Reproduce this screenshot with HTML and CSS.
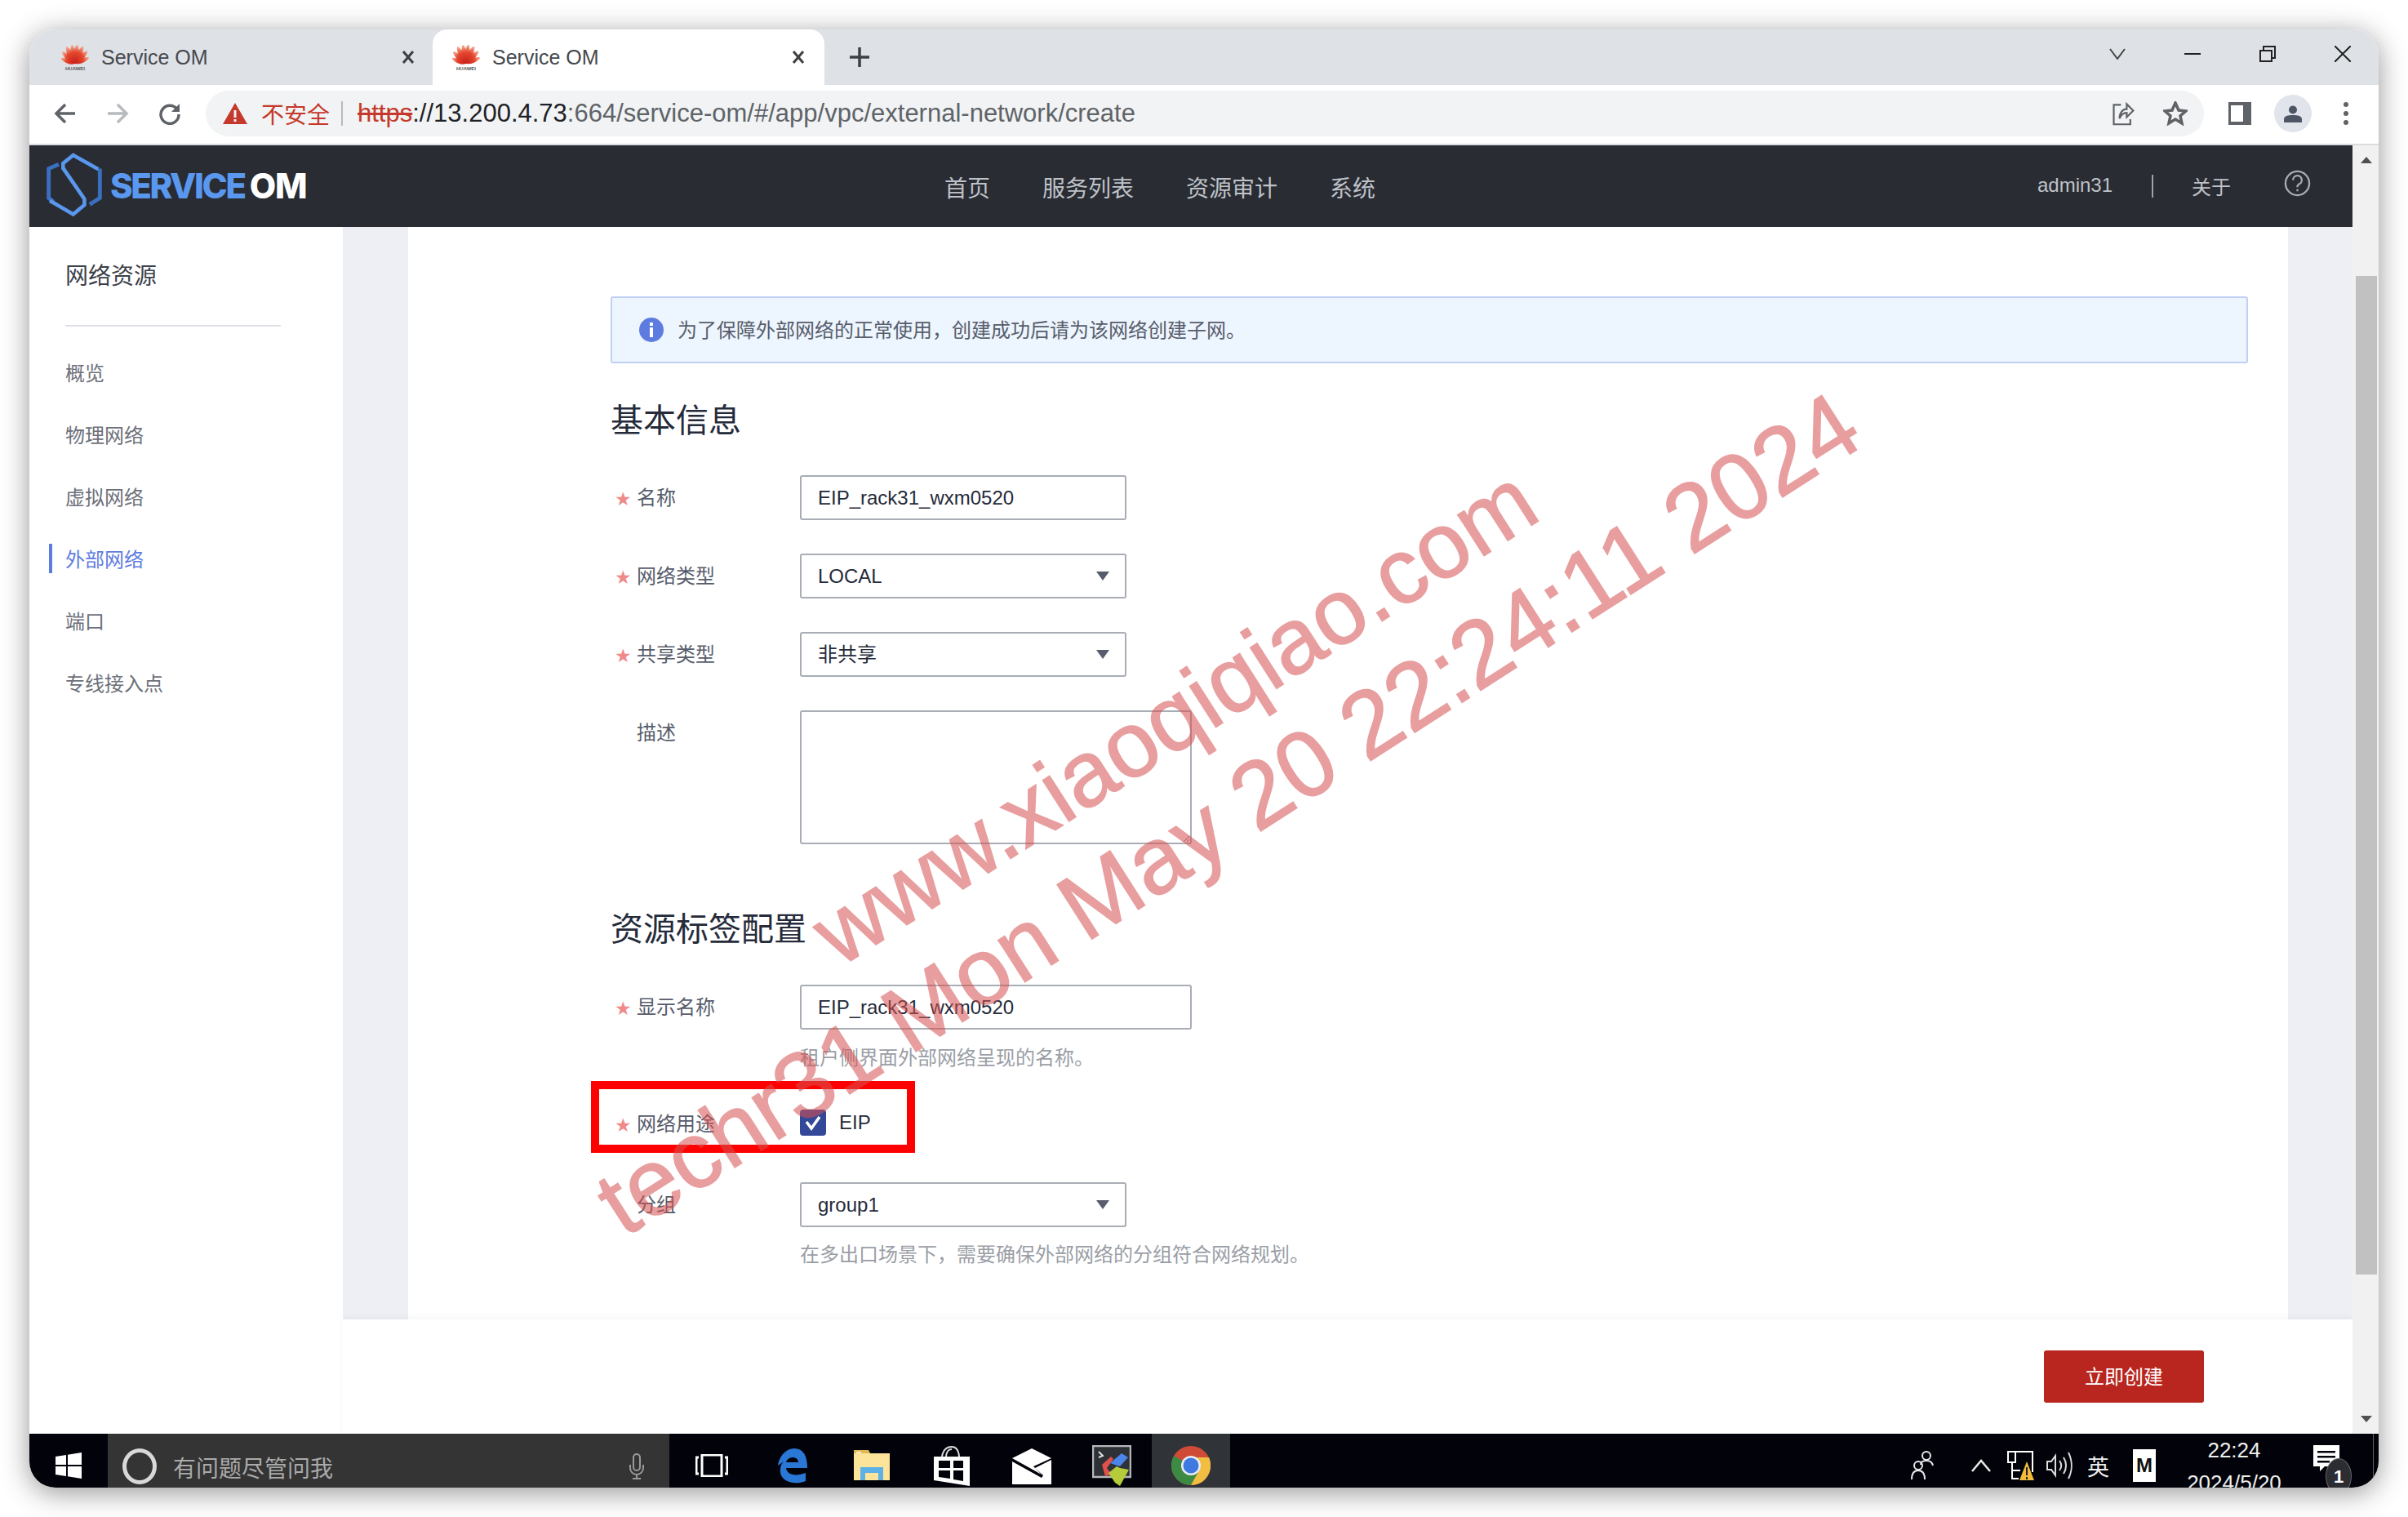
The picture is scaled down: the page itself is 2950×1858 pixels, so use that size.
FILE: index.html
```html
<!DOCTYPE html>
<html lang="zh-CN">
<head>
<meta charset="utf-8">
<title>Service OM</title>
<link rel="stylesheet" href="styles.css">
</head>
<body>
<svg class="defs" width="0" height="0" aria-hidden="true">
  <defs>
    <linearGradient id="petal" gradientUnits="userSpaceOnUse" x1="0" y1="2" x2="0" y2="25"><stop offset="0" stop-color="#f7b09a"/><stop offset=".4" stop-color="#e4472e"/><stop offset="1" stop-color="#c81f19"/></linearGradient>
    <g id="hw-petal"><path d="M17 25 C12.500 20 11.500 12 15.500 2 L17.500 2 C21 12 21 19 17 25Z" fill="url(#petal)"/></g>
    <symbol id="huawei" viewBox="0 0 34 34">
      <use href="#hw-petal" transform="rotate(-68 17 25) translate(17 25) scale(.8) translate(-17 -25)" />
      <use href="#hw-petal" transform="rotate(-46 17 25) translate(17 25) scale(.92) translate(-17 -25)" />
      <use href="#hw-petal" transform="rotate(-26 17 25)" />
      <use href="#hw-petal" transform="rotate(-8 17 25)" />
      <use href="#hw-petal" transform="rotate(8 17 25)" />
      <use href="#hw-petal" transform="rotate(26 17 25)" />
      <use href="#hw-petal" transform="rotate(46 17 25) translate(17 25) scale(.92) translate(-17 -25)" />
      <use href="#hw-petal" transform="rotate(68 17 25) translate(17 25) scale(.8) translate(-17 -25)" />
      <text x="17" y="33" text-anchor="middle" class="hw-text">HUAWEI</text>
    </symbol>
  </defs>
</svg>
<div class="window">
  <div class="tabstrip">
    <div class="tab">
      <svg class="favicon" viewBox="0 0 34 34"><use href="#huawei"/></svg>
      <span class="tab-title">Service OM</span>
      <svg class="tab-x" viewBox="0 0 18 18"><path d="M3 2 15 16M15 2 3 16" /></svg>
    </div>
    <div class="tab tab-active">
      <svg class="favicon" viewBox="0 0 34 34"><use href="#huawei"/></svg>
      <span class="tab-title">Service OM</span>
      <svg class="tab-x" viewBox="0 0 18 18"><path d="M3 2 15 16M15 2 3 16" /></svg>
    </div>
    <svg class="newtab" viewBox="0 0 26 26"><path d="M13 1V25M1 13H25"/></svg>
    <div class="winctl">
      <svg class="ctl ctl-chev" viewBox="0 0 20 14"><path d="M1 1 10 13 19 1"/></svg>
      <svg class="ctl ctl-min" viewBox="0 0 20 20"><path d="M0 10H20"/></svg>
      <svg class="ctl ctl-max" viewBox="0 0 20 20"><path d="M1 6H15V19H1ZM5 6V1H19V15H15"/></svg>
      <svg class="ctl ctl-close" viewBox="0 0 20 20"><path d="M0 0 20 20M20 0 0 20"/></svg>
    </div>
  </div>

  <div class="toolbar">
    <svg class="nav-ico nav-back" viewBox="0 0 28 28"><path d="M26 14H4M14 3 3 14 14 25"/></svg>
    <svg class="nav-ico nav-fwd" viewBox="0 0 28 28"><path d="M2 14H24M14 3 25 14 14 25"/></svg>
    <svg class="nav-ico nav-reload" viewBox="0 0 28 28"><path d="M23 9A11 11 0 1 0 25 15"/><path class="fill" d="M26 2V12H16Z"/></svg>
    <div class="omnibox">
      <svg class="warn" viewBox="0 0 30 26"><path d="M15 0 30 26H0Z"/><rect class="warn-in" x="13.500" y="9" width="3" height="9"/><rect class="warn-in" x="13.500" y="20" width="3" height="3"/></svg>
      <span class="insecure">不安全</span>
      <span class="omni-sep"></span>
      <span class="url"><span class="scheme">https</span>://13.200.4.73<span class="url-dim">:664/service-om/#/app/vpc/external-network/create</span></span>
      <svg class="omni-ico omni-share" viewBox="0 0 30 34"><path d="M12 5H2V32H25V25"/><path d="M10 24C10 15 15 11 20 11V4L29 13 20 22V16C15 16 12 19 10 24Z"/></svg>
      <svg class="omni-ico omni-star" viewBox="0 0 30 30"><path d="M15 2 19 11 28 12 21 18 23 27 15 22 7 27 9 18 2 12 11 11Z"/></svg>
    </div>
    <svg class="panel-ico" viewBox="0 0 28 28"><path fill-rule="evenodd" d="M0 0H28V28H0ZM3 4V24H18V4Z"/></svg>
    <div class="profile"><svg viewBox="0 0 24 24"><circle cx="12" cy="7.500" r="5"/><path d="M1 23V19C1 15 6 14 12 14S23 15 23 19V23Z"/></svg></div>
    <div class="kebab"><i></i><i></i><i></i></div>
  </div>

  <div class="page">
    <div class="main">
      <header class="apphead">
        <div class="logo">
          <svg class="logo-mark" viewBox="48 15 212 245">
            <path class="lm-dark" d="M96 62 58 78V188L76 202M250 78V188L212 212"/>
            <path class="lm-light" d="M244 80 150 27 112 58V76L192 192V214L150 249 62 198"/>
          </svg>
          <span class="logo-text"><span class="logo-blue">SERVICE</span><span class="logo-white">OM</span></span>
        </div>
        <nav class="topnav">
          <a>首页</a><a>服务列表</a><a>资源审计</a><a>系统</a>
        </nav>
        <div class="userbox">
          <span class="user">admin31</span>
          <span class="user-sep"></span>
          <span class="about">关于</span>
          <svg class="help" viewBox="0 0 34 34"><circle cx="17" cy="17" r="15"/><path d="M11.500 13A5.500 5.500 0 1 1 19 18C17.500 19 17 20 17 22"/><path d="M17 24.500V27"/></svg>
        </div>
      </header>
      <div class="appbody">
        <aside class="sidebar">
          <div class="side-title">网络资源</div>
          <div class="side-rule"></div>
          <ul class="side-list">
            <li>概览</li>
            <li>物理网络</li>
            <li>虚拟网络</li>
            <li class="active">外部网络</li>
            <li>端口</li>
            <li>专线接入点</li>
          </ul>
        </aside>
        <div class="workspace">
          <div class="gutter">
            <section class="panel">
              <div class="alert">
                <svg class="alert-ico" viewBox="0 0 30 30"><circle cx="15" cy="15" r="15"/><rect class="alert-i" x="13" y="6" width="4" height="4"/><rect class="alert-i" x="13" y="12" width="4" height="12"/></svg>
                <span class="alert-text">为了保障外部网络的正常使用，创建成功后请为该网络创建子网。</span>
              </div>
              <h2 class="sec-title sec-first">基本信息</h2>
              <div class="row">
                <label class="lbl req">名称</label>
                <input class="field f-short" value="EIP_rack31_wxm0520" readonly>
              </div>
              <div class="row">
                <label class="lbl req">网络类型</label>
                <div class="field f-short select">LOCAL</div>
              </div>
              <div class="row">
                <label class="lbl req">共享类型</label>
                <div class="field f-short select">非共享</div>
              </div>
              <div class="row">
                <label class="lbl">描述</label>
                <textarea class="area" readonly></textarea>
              </div>
              <h2 class="sec-title sec-second">资源标签配置</h2>
              <div class="row">
                <label class="lbl req">显示名称</label>
                <input class="field f-long" value="EIP_rack31_wxm0520" readonly>
              </div>
              <div class="hint hint-1">租户侧界面外部网络呈现的名称。</div>
              <div class="row row-eip">
                <label class="lbl req">网络用途</label>
                <div class="check-wrap">
                  <svg class="check" viewBox="0 0 32 32"><rect width="32" height="32" rx="4"/><path d="M8 15 14 23 24 9"/></svg>
                  <span>EIP</span>
                </div>
                <div class="redbox"></div>
              </div>
              <div class="row row-group">
                <label class="lbl">分组</label>
                <div class="field f-short select">group1</div>
              </div>
              <div class="hint hint-2">在多出口场景下，需要确保外部网络的分组符合网络规划。</div>
            </section>
          </div>
          <footer class="actionbar"><button class="primary">立即创建</button></footer>
        </div>
      </div>
    </div>
    <div class="scrollbar">
      <span class="sb-up"></span>
      <span class="sb-thumb"></span>
      <span class="sb-down"></span>
    </div>
  </div>

  <div class="taskbar">
    <div class="start">
      <svg viewBox="0 0 32 32"><path d="M0 5 13 3V15H0ZM15 2.700 32 0V15H15ZM0 17H13V29L0 27ZM15 17H32V32L15 29.300Z"/></svg>
    </div>
    <div class="search">
      <span class="cortana"></span>
      <span class="search-text">有问题尽管问我</span>
      <svg class="mic" viewBox="0 0 20 32"><rect x="6" y="1" width="8" height="20" rx="4"/><path d="M2 14V18A8 8 0 0 0 18 18V14M10 26V31M5 31H15"/></svg>
    </div>
    <div class="apps">
      <div class="app"><svg viewBox="0 0 40 28" class="i-task"><rect x="8" y="1" width="24" height="26"/><path d="M4 4H1V24H4M36 4H39V24H36"/></svg></div>
      <div class="app"><svg viewBox="0 0 40 44" class="i-edge"><path d="M3 22C5 9 14 1 23 1C34 1 39 10 39 25H13C14 33 24 36 37 31V41C22 47 4 41 6 26C6 22 8 19 11 16C9 18 6 20 3 22ZM13 18H28C28 10 15 10 13 18Z"/></svg></div>
      <div class="app"><svg viewBox="0 0 44 40" class="i-folder"><path class="f-tab" d="M0 2H18L20 5H44V10H0Z"/><path class="f-body" d="M0 5H44V38H0Z"/><path class="f-blue" d="M8 38V22H36V38H30V29H14V38Z"/><path class="f-tab" d="M0 1H18L20 5H0Z"/><rect x="3" y="3" width="6" height="1.500" fill="#fff"/></svg></div>
      <div class="app"><svg viewBox="0 0 44 50" class="i-store"><path class="st-bag" fill-rule="evenodd" d="M0 14H44V50L0 43ZM6 19V28H20V19ZM24 19V28H36V19ZM6 31V39L20 41V31ZM24 31V42L36 44V31Z"/><path class="st-handle" d="M10 14C12 2 20 2 22 2C24 2 30 2 31 14"/><path class="st-handle" d="M15 14C16 5 20 5 22 5"/></svg></div>
      <div class="app"><svg viewBox="0 0 48 44" class="i-mail"><path d="M0 12 24 0 48 12 26 22 36 32ZM0 16 36 36 38 33 28 24 48 14V44H0Z" fill-rule="nonzero"/></svg></div>
      <div class="app"><svg viewBox="0 0 48 50" class="i-term"><rect x="1" y="1" width="46" height="38" fill="#2e3236" stroke="#b5b8ba" stroke-width="2.500"/><path d="M8 8 13 13 8 15" stroke="#ddd" fill="none" stroke-width="2"/><path d="M12 24 23 14 26 17 18 28 24 36 16 38Z" fill="#e0504d"/><path d="M22 22 36 10 44 15 34 26Z" fill="#4c85ea"/><path d="M20 34 30 26 34 28 45 30 34 50 28 46Z" fill="#b5cb3a"/></svg></div>
      <div class="app app-active"><svg viewBox="0 0 48 48" class="i-chrome"><circle cx="24" cy="24" r="24" fill="#d04a38"/><path d="M24 24 3.200 12A24 24 0 0 0 24 48L36 28Z" fill="#3d8a44"/><path d="M24 14H46A24 24 0 0 1 24 48L34 30Z" fill="#f2be42"/><circle cx="24" cy="24" r="12" fill="#e8edf5"/><circle cx="24" cy="24" r="9.500" fill="#3f78e0"/></svg></div>
    </div>
    <div class="tray">
      <svg class="t-people" viewBox="0 0 28 36"><circle cx="19" cy="6" r="5"/><path d="M12 17C12 13 15 12 19 12S26 13 27 18"/><circle cx="9" cy="18" r="5"/><path d="M1 35C1 27 4 24 9 24S17 27 17 35"/></svg>
      <svg class="t-caret" viewBox="0 0 24 16"><path d="M1 15 12 2 23 15"/></svg>
      <svg class="t-net" viewBox="0 0 32 36"><path d="M6 1H31V26M1 1H10V14H1ZM6 14V34H14M6 24H16"/><path class="t-warn" d="M24 13 33 36H15Z"/><path class="t-warn-i" d="M24 20V30M24 32V35"/></svg>
      <svg class="t-speak" viewBox="0 0 32 36"><path d="M1 13H6L11 6V30L6 23H1ZM16 12C19 16 19 20 16 24M21 8C25 14 25 22 21 28M27 2C32 12 32 24 27 34"/></svg>
      <span class="t-lang">英</span>
      <span class="t-ime">M</span>
      <div class="clock"><span>22:24</span><span>2024/5/20</span></div>
      <div class="notify">
        <svg viewBox="0 0 32 38"><path fill-rule="evenodd" d="M0 0H32V26H14L8 32V26H0ZM5 7V9.500H27V7ZM5 13V15.500H27V13ZM5 19V21.500H20V19Z"/></svg>
        <span class="badge">1</span>
      </div>
      <span class="show-desk"></span>
    </div>
  </div>

  <div class="watermark wm-1">www.xiaoqiqiao.com</div>
  <div class="watermark wm-2">techr31 Mon May 20 22:24:11 2024</div>
</div>
</body>
</html>
```

FILE: styles.css
```css
* { box-sizing: border-box; }
html, body { margin: 0; padding: 0; }
body {
  width: 2950px;
  height: 1858px;
  padding: 36px;
  background: #fff;
  overflow: hidden;
  font-family: "Liberation Sans", "Noto Sans CJK SC", sans-serif;
  color: #252b3a;
}
.defs { position: absolute; }
.hw-text { font: 700 6px "Liberation Sans", sans-serif; fill: #555; }

.window {
  position: relative;
  width: 2878px;
  height: 1786px;
  display: flex;
  flex-direction: column;
  border-radius: 32px;
  overflow: hidden;
  background: #fff;
}
body::before {
  content: "";
  position: absolute;
  left: 36px; top: 36px;
  width: 2878px; height: 1786px;
  border-radius: 32px;
  box-shadow: 0 6px 34px rgba(0,0,0,.42);
}

/* tab strip */
.tabstrip {
  height: 68px;
  flex: none;
  display: flex;
  align-items: stretch;
  background: #dee1e6;
}
.tab {
  width: 494px;
  flex: none;
  display: flex;
  align-items: center;
  padding-left: 39px;
  position: relative;
  border-radius: 18px 18px 0 0;
}
.tab-active { width: 480px; padding-left: 24px; background: #fff; }
.favicon { width: 34px; height: 34px; flex: none; }
.tab-title { margin-left: 15px; font-size: 25px; color: #45484d; }
.tab-x {
  position: absolute;
  right: 20px; top: 25px;
  width: 18px; height: 18px;
  fill: none; stroke: #3c4043; stroke-width: 3;
}
.tab:first-child .tab-x { right: 21px; }
.tab-active .tab-x { right: 23px; }
.newtab {
  width: 26px; height: 26px;
  margin: 21px 0 0 30px;
  fill: none; stroke: #3c4043; stroke-width: 3.500;
}
.winctl { margin-left: auto; display: flex; align-items: center; padding-right: 34px; }
.ctl { fill: none; stroke: #222; stroke-width: 2; width: 20px; height: 20px; margin-left: 72px; margin-top: -8px; }
.ctl-chev { height: 14px; stroke: #444; }

/* toolbar */
.toolbar {
  height: 74px;
  flex: none;
  display: flex;
  align-items: center;
  padding: 0 0 2px 30px;
  background: #fff;
  border-bottom: 2px solid #dadce0;
}
.nav-ico { width: 28px; height: 28px; fill: none; stroke: #5f6368; stroke-width: 3.500; flex: none; }
.nav-fwd { margin-left: 36px; stroke: #b7babe; }
.nav-reload { margin-left: 36px; }
.nav-reload .fill { fill: #5f6368; stroke: none; }
.omnibox {
  width: 2448px;
  height: 56px;
  margin-left: 30px;
  display: flex;
  align-items: center;
  padding-left: 21px;
  border-radius: 28px;
  background: #f1f3f4;
  flex: none;
}
.warn { width: 30px; height: 26px; fill: #c5382b; flex: none; }
.warn-in { fill: #f1f3f4; }
.insecure { margin-left: 17px; font-size: 28px; color: #c5382b; }
.omni-sep { width: 2px; height: 30px; margin-left: 14px; background: #b8babd; }
.url { margin-left: 18px; font-size: 31px; color: #202124; white-space: nowrap; }
.url-dim { color: #5f6368; }
.scheme { color: #c5382b; text-decoration: line-through; }
.omni-ico { width: 30px; height: 30px; fill: none; stroke: #5f6368; stroke-width: 2.500; flex: none; }
.omni-share { margin-left: auto; }
.omni-star { margin-left: 34px; margin-right: 20px; stroke-width: 3.500; }
.panel-ico { width: 28px; height: 28px; margin-left: 30px; fill: #5f6368; flex: none; }
.profile {
  width: 46px; height: 46px;
  margin-left: 28px;
  display: flex; align-items: center; justify-content: center;
  border-radius: 50%;
  background: #e1e4ea;
  flex: none;
}
.profile svg { width: 24px; height: 26px; fill: #4e5564; }
.kebab { margin-left: 39px; display: flex; flex-direction: column; gap: 5px; }
.kebab i { width: 6px; height: 6px; border-radius: 50%; background: #5f6368; }

/* page */
.page { flex: 1; min-height: 0; display: flex; }
.main { flex: 1; min-width: 0; display: flex; flex-direction: column; }

.apphead {
  height: 100px;
  flex: none;
  display: flex;
  align-items: center;
  background: #292c33;
  position: relative;
}
.logo { width: 1121px; flex: none; display: flex; align-items: center; padding-left: 20px; margin-top: -4px; }
.logo-mark { width: 70px; height: 80px; flex: none; fill: none; stroke-linejoin: miter; }
.lm-dark { stroke: #3a6fc0; stroke-width: 15; }
.lm-light { stroke: #5a97ee; stroke-width: 14; }
.logo-text { margin-left: 9px; font: 800 42px Inter, "Liberation Sans", sans-serif; white-space: nowrap; margin-top: 2px; }
.logo-blue { color: #5a97ee; letter-spacing: -2.400px; }
.logo-white { color: #fff; margin-left: 6px; letter-spacing: -1px; }
.topnav { display: flex; gap: 64px; font-size: 28px; color: #bfc2c8; margin-top: 2px; }
.userbox { margin-left: auto; display: flex; align-items: center; padding-right: 51px; color: #bfc2c8; }
.user { font-size: 24px; margin-top: -2px; }
.user-sep { width: 2px; height: 28px; margin: 0 47px 0 48px; background: #9fa2a8; }
.about { font-size: 24px; margin-top: -2px; margin-right: 2px; }
.help { width: 33px; height: 33px; margin-left: 63px; margin-top: -8px; fill: none; stroke: #a8abb1; stroke-width: 2.400; }

.appbody { flex: 1; min-height: 0; display: flex; }
.sidebar { width: 384px; flex: none; padding: 43px 0 0 44px; background: #fff; }
.side-title { font-size: 28px; line-height: 36px; color: #3c404a; }
.side-rule { width: 264px; height: 2px; margin-top: 41px; background: #dfe1e6; }
.side-list { list-style: none; margin: 20px 0 0; padding: 0; }
.side-list li { position: relative; height: 76px; line-height: 76px; font-size: 24px; color: #6c707a; }
.side-list .active { color: #5e7ce0; }
.side-list .active::before {
  content: "";
  position: absolute;
  left: -20px; top: 18px;
  width: 4px; height: 36px;
  background: #5e7ce0;
}

.workspace { flex: 1; min-width: 0; display: flex; flex-direction: column; }
.gutter { flex: 1; min-height: 0; padding: 0 79px 0 80px; background: #edeff4; overflow: hidden; }
.panel { height: 100%; padding: 85px 49px 0 248px; background: #fff; }
.alert {
  height: 82px;
  display: flex; align-items: center;
  padding-left: 33px;
  font-size: 24px;
  color: #575d6c;
  background: #edf5fe;
  border: 2px solid #bfd0f4;
  border-radius: 3px;
}
.alert-ico { width: 30px; height: 32px; margin-right: 17px; fill: #5e7ce0; flex: none; }
.alert-i { fill: #fff; }
.alert-text { margin-top: -3px; }
.sec-title { margin: 0; height: 56px; line-height: 56px; font-size: 40px; font-weight: 400; color: #252b3a; }
.sec-first { margin-top: 42px; margin-bottom: 39px; }
.sec-second { margin-top: 76px; margin-bottom: 40px; }
.row { display: flex; position: relative; margin-bottom: 41px; }
.lbl {
  width: 232px; flex: none;
  padding-left: 32px;
  position: relative;
  font-size: 24px; line-height: 55px;
  color: #575d6c;
}
.req::before {
  content: "★";
  position: absolute;
  left: 5px; top: 2px;
  font: 23px/55px "DejaVu Sans", sans-serif;
  color: #f08a8a;
}
.field {
  display: block;
  height: 55px;
  padding: 0 20px;
  font: 24px/51px "Liberation Sans", "Noto Sans CJK SC", sans-serif;
  color: #252b3a;
  background: #fff;
  border: 2px solid #a9adb5;
  border-radius: 3px;
  outline: none;
}
.f-short { width: 400px; }
.f-long { width: 480px; margin-bottom: -24px; }
.select { position: relative; }
.select::after {
  content: "";
  position: absolute;
  right: 19px; top: 20px;
  border-left: 8px solid transparent;
  border-right: 8px solid transparent;
  border-top: 11px solid #575d6c;
}
.area {
  display: block;
  width: 480px; height: 164px;
  border: 2px solid #a9adb5;
  border-radius: 3px;
  outline: none;
  background: #fff;
}
.hint { font-size: 24px; line-height: 36px; color: #9a9ea6; padding-left: 232px; }
.hint-1 { margin-top: -24px; margin-bottom: 35px; }
.hint-2 { margin-top: -25px; }
.row-eip { margin-bottom: 44px; }
.row-group { margin-bottom: 41px; }
.check-wrap { display: flex; align-items: center; gap: 16px; font-size: 24px; color: #252b3a; height: 55px; margin-top: -2px; }
.check { width: 32px; height: 32px; }
.check rect { fill: #344899; }
.check path { fill: none; stroke: #fff; stroke-width: 3.500; }
.redbox {
  position: absolute;
  left: -24px; top: -25px;
  width: 397px; height: 88px;
  border: 10px solid #f00;
  pointer-events: none;
}

.actionbar {
  height: 140px;
  flex: none;
  display: flex;
  justify-content: flex-end;
  padding: 38px 182px 0 0;
  background: #fff;
  box-shadow: 0 -3px 8px rgba(0,0,0,.04);
  position: relative;
}
.primary {
  width: 196px; height: 64px;
  padding: 0 0 4px;
  font: 24px "Liberation Sans", "Noto Sans CJK SC", sans-serif;
  color: #fff;
  background: #b8261f;
  border: 0;
  border-radius: 3px;
}

/* page scrollbar */
.scrollbar {
  width: 32px; flex: none;
  display: flex; flex-direction: column; align-items: center;
  background: #f1f1f1;
  position: relative;
}
.sb-up, .sb-down { position: absolute; left: 10px; border-left: 7px solid transparent; border-right: 7px solid transparent; }
.sb-up { top: 14px; border-bottom: 8px solid #505050; }
.sb-down { bottom: 14px; border-top: 8px solid #505050; }
.sb-thumb { position: absolute; left: 4px; top: 160px; width: 26px; height: 1223px; background: #c1c1c1; }

/* taskbar */
.taskbar {
  height: 66px;
  flex: none;
  display: flex;
  align-items: stretch;
  background: #02030a;
  overflow: hidden;
  color: #fff;
}
.start { width: 96px; flex: none; display: flex; align-items: center; padding: 12px 0 0 32px; }
.start svg { width: 32px; height: 32px; fill: #fff; }
.search {
  width: 688px; flex: none;
  display: flex; align-items: center;
  padding: 14px 0 0 18px;
  background: #343434;
}
.cortana { width: 42px; height: 44px; border-radius: 50%; border: 5px solid #d8d8d8; flex: none; }
.search-text { margin-left: 20px; font-size: 28px; color: #aaa; margin-top: 2px; }
.mic { width: 20px; height: 32px; margin-left: auto; margin-right: 30px; fill: none; stroke: #9a9a9a; stroke-width: 2; }
.apps { display: flex; margin-left: 3px; }
.app { width: 98px; flex: none; display: flex; align-items: center; justify-content: center; padding-top: 12px; }
.app-active { background: #303438; width: 96px; }
.i-task { width: 40px; height: 28px; fill: none; stroke: #fff; stroke-width: 3; }
.i-edge { width: 40px; height: 44px; fill: #2a78d6; fill-rule: evenodd; }
.i-folder { width: 44px; height: 40px; }
.f-tab { fill: #e0b850; }
.f-body { fill: #fce59a; }
.f-blue { fill: #5eb0e6; }
.i-store { width: 44px; height: 50px; }
.st-bag { fill: #fff; }
.st-handle { fill: none; stroke: #ddd; stroke-width: 2; }
.i-mail { width: 48px; height: 44px; fill: #fff; margin-top: 2px; }
.i-term { width: 48px; height: 50px; }
.i-chrome { width: 48px; height: 50px; }
.tray { margin-left: auto; display: flex; align-items: center; padding-top: 12px; }
.t-people { width: 28px; height: 36px; fill: none; stroke: #e8e8e8; stroke-width: 2; }
.t-caret { width: 24px; height: 16px; margin-left: 46px; fill: none; stroke: #e8e8e8; stroke-width: 2.500; }
.t-net { width: 32px; height: 36px; margin-left: 20px; fill: none; stroke: #fff; stroke-width: 2; overflow: visible; }
.t-warn { fill: #f2bb3c; stroke: none; }
.t-warn-i { stroke: #222; stroke-width: 2; }
.t-speak { width: 32px; height: 36px; margin-left: 16px; fill: none; stroke: #ddd; stroke-width: 2; }
.t-lang { width: 28px; margin-left: 18px; font-size: 27px; color: #eee; }
.t-ime {
  width: 28px; height: 40px;
  margin-left: 28px;
  font: 700 24px/40px "Liberation Sans", sans-serif;
  text-align: center;
  color: #111;
  background: #fff;
}
.clock {
  width: 120px;
  margin: -12px 0 0 36px;
  display: flex; flex-direction: column; align-items: center;
  align-self: flex-start;
  font-size: 26px; line-height: 40px;
  color: #eee;
  white-space: nowrap;
}
.notify { position: relative; width: 32px; height: 38px; margin: -12px 0 0 37px; }
.notify svg { width: 32px; height: 38px; fill: #fff; }
.badge {
  position: absolute;
  left: 15px; top: 16px;
  width: 32px; height: 44px;
  border-radius: 50%;
  text-align: center;
  font: 700 22px/44px "Liberation Sans", sans-serif;
  color: #fff;
  background: #2b2d33;
  border: 1px solid #666;
}
.show-desk { width: 7px; height: 66px; margin: -12px 0 0 41px; border-left: 1px solid #666; }

/* watermark overlay */
.watermark {
  position: absolute;
  white-space: nowrap;
  color: #d65050;
  opacity: .55;
  -webkit-text-stroke: 1.500px #d65050;
  transform-origin: 0 100%;
  transform: rotate(-32.600deg);
  pointer-events: none;
}
.wm-1 { left: 1002px; top: 1052px; font-size: 113px; line-height: 113px; }
.wm-2 { left: 738px; top: 1381px; font-size: 115px; line-height: 115px; }
```
